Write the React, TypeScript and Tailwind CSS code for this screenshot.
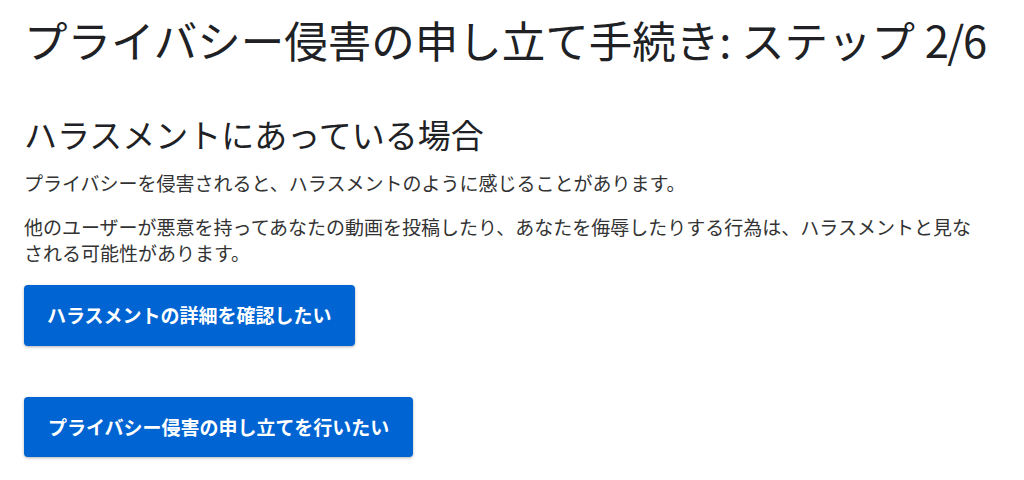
import React from "react";

export default function App() {
  const font = { fontFamily: '"Noto Sans CJK JP", "Noto Sans", sans-serif' };
  return (
    <div className="min-h-[480px] w-[1024px] bg-white pl-[24px] pr-[40px] pt-[14px] text-[#1f1f1f]" style={font}>
      <h1 className="text-[43.5px] leading-[52px] font-normal text-[#202124] whitespace-nowrap">
        プライバシー侵害の申し立て手続き: ステップ <span className="tracking-[-1.5px]">2/6</span>
      </h1>
      <h2 className="mt-[48px] text-[33px] leading-[40px] font-normal text-[#202124]">
        ハラスメントにあっている場合
      </h2>
      <p className="mt-[16px] text-[19px] leading-[26px] text-[#333]">
        プライバシーを侵害されると、ハラスメントのように感じることがあります。
      </p>
      <p className="mt-[18px] text-[19px] leading-[26px] text-[#333]">
        他のユーザーが悪意を持ってあなたの動画を投稿したり、あなたを侮辱したりする行為は、ハラスメントと見なされる可能性があります。
      </p>
      <div className="mt-[19px] flex flex-col items-start gap-[51px]">
        <button className="h-[61px] rounded-[4px] bg-[#0064d2] px-[23px] text-[19px] font-bold text-white shadow-[0_1px_3px_rgba(0,0,0,0.3)]">
          ハラスメントの詳細を確認したい
        </button>
        <button className="h-[60px] rounded-[4px] bg-[#0064d2] px-[24px] text-[19px] font-bold text-white shadow-[0_1px_3px_rgba(0,0,0,0.3)]">
          プライバシー侵害の申し立てを行いたい
        </button>
      </div>
    </div>
  );
}
